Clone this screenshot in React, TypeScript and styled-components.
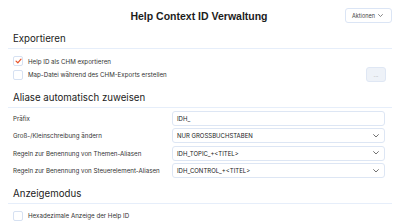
import styled, { createGlobalStyle } from 'styled-components';

const GlobalStyle = createGlobalStyle`
  html, body {
    margin: 0;
    padding: 0;
    background: #ffffff;
  }
  body {
    font-family: Inter, 'Noto Sans', sans-serif;
    color: #222;
  }
`;

const Page = styled.div`
  width: 400px;
  height: 224px;
  box-sizing: border-box;
  padding: 8px 8px 0;
  overflow: hidden;
`;

const Header = styled.header`
  display: grid;
  grid-template-columns: 1fr auto 1fr;
  align-items: center;
  height: 15px;
`;

const Title = styled.h1`
  grid-column: 2;
  margin: 0 0 0 -2px;
  font-family: 'Liberation Sans', Arial, sans-serif;
  font-size: 10.5px;
  font-weight: 700;
  color: #1c1c1c;
`;

const MenuButton = styled.button`
  grid-column: 3;
  justify-self: end;
  display: flex;
  align-items: center;
  gap: 3px;
  height: 15px;
  width: 47px;
  padding: 0 4px 0 6px;
  box-sizing: border-box;
  border: 1px solid #dbe5f5;
  border-radius: 3px;
  background: #fff;
  font-family: Inter, sans-serif;
  font-size: 5.5px;
  color: #444;
`;

const Section = styled.section<{ $gap: number }>`
  margin-top: ${(p) => p.$gap}px;
`;

const SectionTitle = styled.h2`
  margin: 0;
  padding: 0 5px 3px;
  font-size: 9.7px;
  line-height: 12px;
  font-weight: 400;
  color: #222;
  border-bottom: 1px solid #e6eefa;
`;

const CheckList = styled.div`
  display: flex;
  flex-direction: column;
  gap: 1px;
  padding: 7px 5px 0;
`;

const CheckRow = styled.label`
  display: flex;
  align-items: center;
  gap: 5px;
  min-height: 10px;
  font-size: 6.2px;
  color: #333;
`;

const Box = styled.span`
  display: inline-flex;
  align-items: center;
  justify-content: center;
  width: 10px;
  height: 10px;
  box-sizing: border-box;
  border: 1px solid #d6e1f2;
  border-radius: 2px;
  background: #fff;
`;

const Spacer = styled.span`
  flex: 1;
`;

const DotsButton = styled.button`
  width: 20px;
  height: 15px;
  margin-right: 1px;
  padding: 0;
  border: 1px solid #dfe7f4;
  border-radius: 3px;
  background: #eef2f8;
  color: #999;
  font-size: 6px;
  line-height: 1;
`;

const Form = styled.div`
  display: flex;
  flex-direction: column;
  gap: 2.3px;
  padding: 3px 7px 0 5px;
`;

const FieldRow = styled.div`
  display: grid;
  grid-template-columns: 159px 1fr;
  align-items: center;
  font-size: 6.2px;
  color: #333;
`;

const Field = styled.div`
  display: flex;
  align-items: center;
  justify-content: space-between;
  height: 15px;
  box-sizing: border-box;
  padding: 0 5px 0 4px;
  border: 1px solid #dde6f4;
  border-radius: 3px;
  background: #fff;
  font-size: 6px;
  color: #222;
`;

const Chevron = ({ size = 6 }: { size?: number }) => (
  <svg width={size} height={size * 0.6} viewBox="0 0 10 6" fill="none">
    <path d="M1 1l4 4 4-4" stroke="#555" strokeWidth="1.4" strokeLinecap="round" strokeLinejoin="round" />
  </svg>
);

const Check = () => (
  <svg width="7" height="6" viewBox="0 0 10 8" fill="none">
    <path d="M1.5 4.2l2.5 2.4L8.6 1.4" stroke="#e8542a" strokeWidth="1.8" strokeLinecap="round" strokeLinejoin="round" />
  </svg>
);

const fields = [
  { label: 'Präfix', value: 'IDH_', select: false },
  { label: 'Groß-/Kleinschreibung ändern', value: 'NUR GROSSBUCHSTABEN', select: true },
  { label: 'Regeln zur Benennung von Themen-Aliasen', value: 'IDH_TOPIC_+<TITEL>', select: true },
  { label: 'Regeln zur Benennung von Steuerelement-Aliasen', value: 'IDH_CONTROL_+<TITEL>', select: true },
];

export default function App() {
  return (
    <Page>
      <GlobalStyle />
      <Header>
        <Title>Help Context ID Verwaltung</Title>
        <MenuButton>
          Aktionen <Chevron size={5} />
        </MenuButton>
      </Header>

      <Section $gap={10}>
        <SectionTitle>Exportieren</SectionTitle>
        <CheckList>
          <CheckRow>
            <Box>
              <Check />
            </Box>
            Help ID als CHM exportieren
          </CheckRow>
          <CheckRow>
            <Box />
            Map-Datei während des CHM-Exports erstellen
            <Spacer />
            <DotsButton>...</DotsButton>
          </CheckRow>
        </CheckList>
      </Section>

      <Section $gap={10}>
        <SectionTitle>Aliase automatisch zuweisen</SectionTitle>
        <Form>
          {fields.map((f) => (
            <FieldRow key={f.label}>
              <span>{f.label}</span>
              <Field>
                <span>{f.value}</span>
                {f.select && <Chevron />}
              </Field>
            </FieldRow>
          ))}
        </Form>
      </Section>

      <Section $gap={10}>
        <SectionTitle>Anzeigemodus</SectionTitle>
        <CheckList>
          <CheckRow>
            <Box />
            Hexadezimale Anzeige der Help ID
          </CheckRow>
        </CheckList>
      </Section>
    </Page>
  );
}
